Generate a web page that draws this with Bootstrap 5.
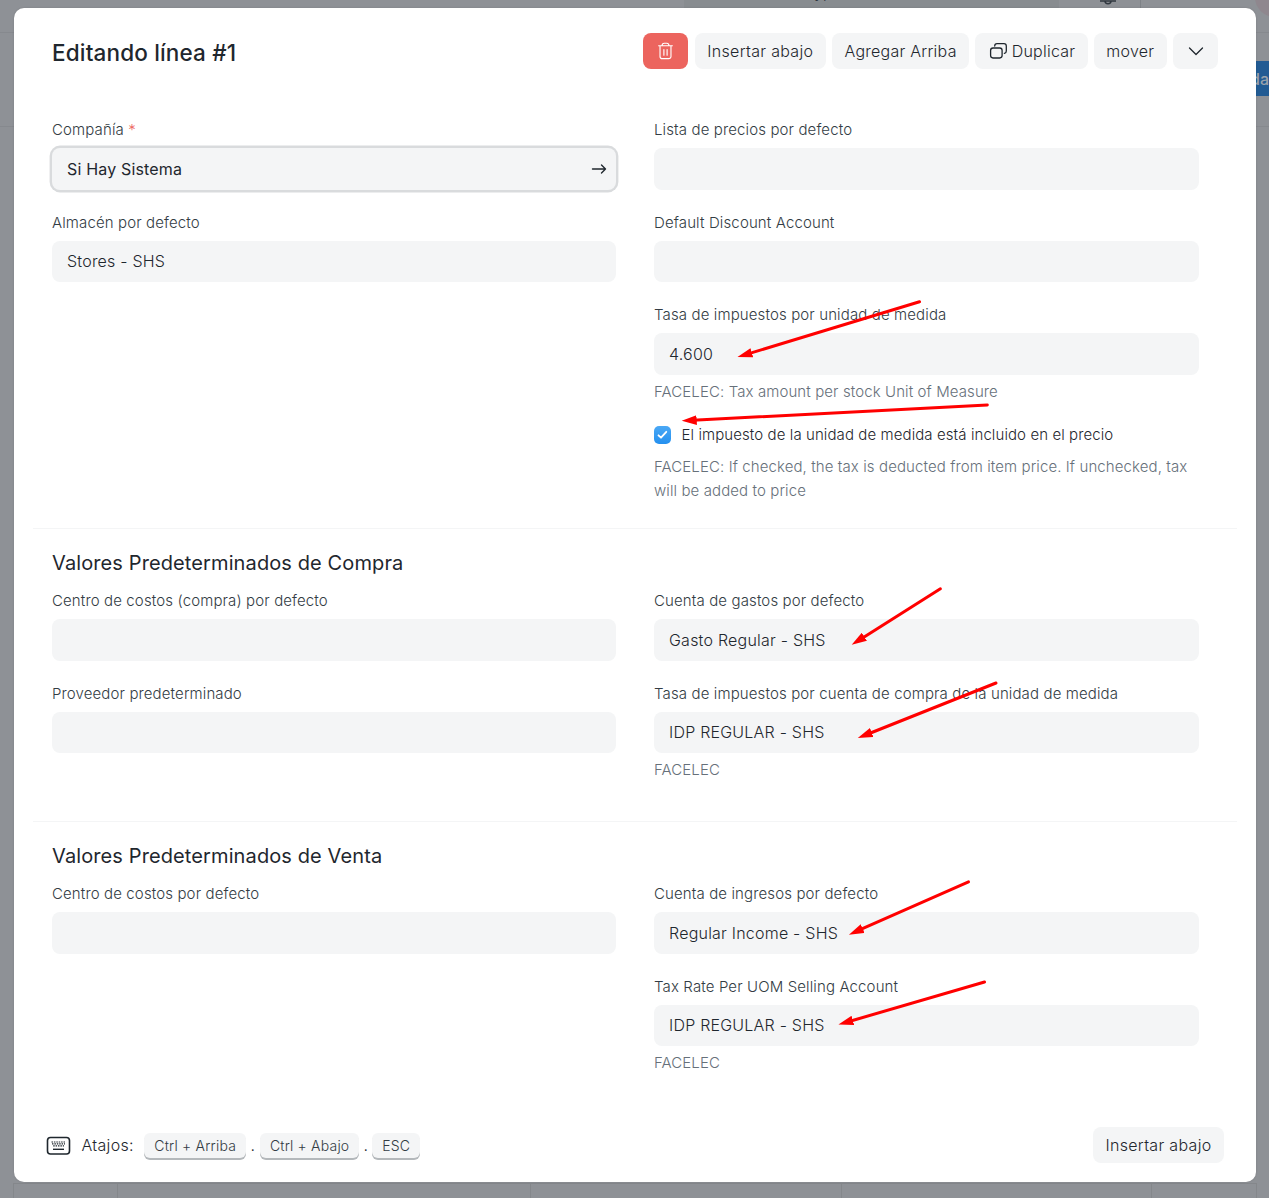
<!DOCTYPE html>
<html lang="es">
<head>
<meta charset="utf-8">
<meta name="viewport" content="width=device-width, initial-scale=1">
<title>Editando línea #1</title>
<link href="https://cdn.jsdelivr.net/npm/bootstrap@5.3.0/dist/css/bootstrap.min.css" rel="stylesheet">
<style>
  html, body { height: 1198px; overflow: hidden; }
  body { font-family: Inter, "Liberation Sans", sans-serif; font-weight: 350; background: #8e9196; color: #1f272e; position: relative; }
  .page-behind { height: 1198px; }
  .top-strip { height: 33px; border-bottom: 1px solid #86898e; color: #30373f; }
  .search-stub { margin-left: 684px; width: 375px; height: 8px; padding-left: 49px; background: #888c90; font-size: 15.5px; letter-spacing: .2px; line-height: 20px; white-space: nowrap; }
  .search-stub span { display: block; margin-top: -17px; }
  .avatar-stub { margin-left: auto; width: 40px; height: 40px; border-radius: 50%; background: #8f878e; margin-top: -23px; margin-right: -26px; }
  .head-strip { height: 94px; border-bottom: 1px solid #86898e; }
  .save-stub { width: 30px; height: 35px; margin: 28px 0 0 auto; background: #225b93; color: #9ba2ab; font-size: 16px; font-weight: 450; line-height: 36px; text-align: right; }
  .grid-stub { height: 15px; margin: 0 12px 0 13px; border: 1px solid #84878b; border-bottom: 0; }
  .grid-stub div { border-right: 1px solid #84878b; }
  .editor { position: absolute; left: 14px; top: 8px; width: 1242px; height: 1174px; border: 0; border-radius: 10px; background: #fff; box-shadow: 0 0 2px rgba(0,0,0,.15); }
  .editor-head { height: 85px; padding: 25px 38px 0; }
  .editor-title { font-size: 22.5px; font-weight: 550; line-height: 38px; letter-spacing: .16px; margin: 1px 0 0; }
  .btn-soft, .btn-del { height: 36px; border: 0; border-radius: 8px; background: #f4f5f6; color: #1f272e; font-size: 16px; font-weight: 350; letter-spacing: .25px; padding: 0 12.3px; line-height: 36px; white-space: nowrap; }
  .btn-insert { width: 131px; letter-spacing: .32px; padding: 0; }
  .btn-del { background: #ec645e; width: 45px; padding: 0; }
  .btn-caret { width: 45px; padding: 0; }
  .form-part { margin: 0 19px; padding: 0 19px; }
  .form-part + .form-part { border-top: 1px solid #f4f5f6; }
  .col-left { width: 564px; }
  .col-right { width: 545px; margin-left: 38px; }
  .fld { height: 92.5px; }
  .fld label { display: block; height: 26px; line-height: 16px; font-size: 15px; letter-spacing: .125px; color: #333c44; white-space: nowrap; }
  .fld .form-control { height: 41.6px; border: 0; border-radius: 8px; background: #f4f5f6; color: #1f272e; font-size: 16px; font-weight: 350; letter-spacing: .22px; padding: 0 15px; line-height: 42px; display: flex; align-items: center; }
  .fld .is-focus { box-shadow: 0 0 0 2.4px #d9dbdd; font-weight: 400; letter-spacing: .17px; }
  .hint { font-size: 15px; line-height: 24px; letter-spacing: .1px; color: #66707a; margin: 0; }
  .sec-title { font-size: 20px; font-weight: 430; line-height: 24px; letter-spacing: .11px; margin: 0; }
  .chk-box { width: 17px; height: 18px; border-radius: 5px; background: linear-gradient(#4aa8f5, #2490ef); }
  .chk-text { font-size: 15px; letter-spacing: .09px; line-height: 18px; margin-left: 10.500px; white-space: nowrap; }
  .editor-foot { margin-top: auto; height: 55px; padding: 0 32px; }
  .key-cap { height: 25px; line-height: 26px; font-size: 14px; letter-spacing: .2px; padding: 0 10px; border-radius: 6px; background: #f4f5f6; color: #333c44; box-shadow: 0 2px 0 #b4b8bb; white-space: nowrap; }
  .foot-text { font-size: 16px; letter-spacing: .3px; }
  .arrows { position: absolute; left: 0; top: 0; pointer-events: none; }
</style>
</head>
<body>
<div class="page-behind d-flex flex-column">
  <div class="top-strip d-flex">
    <div class="search-stub"><span>Search or type a command (Ctrl + G)</span></div>
    <svg style="margin-left:39px" width="44" height="8" viewBox="0 0 44 8" fill="none" stroke="#30373f" stroke-width="1.500"><path d="M2 1h16M7 1c0 3.500 6 3.500 6 0"/><path d="M42.500 0v8" stroke="#7e8287" stroke-width="1"/></svg>
    <div class="avatar-stub"></div>
  </div>
  <div class="head-strip d-flex"><div class="save-stub">da</div></div>
  <div class="grid-stub d-flex mt-auto"><div style="width:104px"></div><div style="width:413px"></div><div style="width:311px"></div><div style="width:310px"></div></div>
</div>

<div class="editor d-flex flex-column">
  <div class="editor-head d-flex justify-content-between align-items-start">
    <h4 class="editor-title">Editando línea #1</h4>
    <div class="d-flex" style="gap:6.4px">
      <button class="btn btn-del d-flex align-items-center justify-content-center" aria-label="Eliminar">
        <svg width="17" height="20" viewBox="0 0 18 20" fill="none" stroke="#fff" stroke-width="1.200" stroke-linecap="round" stroke-linejoin="round"><path d="M1.700 4.500h14.600M3.200 4.500v11.200a2.400 2.400 0 0 0 2.400 2.400h6.800a2.400 2.400 0 0 0 2.400-2.400V4.500M5.300 4.300c.1-1.700 1-2.500 2.300-2.500h2.800c1.300 0 2.200.8 2.300 2.500M7.300 8.500v6M10.700 8.500v6"/></svg>
      </button>
      <button class="btn btn-soft btn-insert">Insertar abajo</button>
      <button class="btn btn-soft">Agregar Arriba</button>
      <button class="btn btn-soft d-flex align-items-center"><svg style="margin-right:4px" width="20" height="20" viewBox="0 0 20 20" fill="none" stroke="#1f272e" stroke-width="1.300"><rect x="2.600" y="7" width="11.500" height="10" rx="2.400"/><path d="M6.700 5c0-1.500.8-2.300 2.300-2.300h7c1.500 0 2.300.8 2.300 2.300v5c0 1.500-.6 2.200-1.900 2.400" stroke-linecap="round"/></svg>Duplicar</button>
      <button class="btn btn-soft">mover</button>
      <button class="btn btn-soft btn-caret d-flex align-items-center justify-content-center" aria-label="Contraer"><svg width="16" height="10" viewBox="0 0 16 10" fill="none" stroke="#1f272e" stroke-width="1.300" stroke-linecap="round" stroke-linejoin="round"><path d="M1.500 2 8 8.500 14.500 2"/></svg></button>
    </div>
  </div>

  <div class="form-part d-flex" style="height:435px;padding-top:29px">
    <div class="col-left">
      <div class="fld"><label>Compañía <span style="color:#ec645e">*</span></label>
        <div class="form-control is-focus justify-content-between">Si Hay Sistema
          <svg width="16" height="12" viewBox="0 0 16 12" fill="none" stroke="#1f272e" stroke-width="1.400" stroke-linecap="round" stroke-linejoin="round" style="margin-right:-6px"><path d="M1.500 6h13M10.500 2l4 4-4 4"/></svg>
        </div></div>
      <div class="fld"><label>Almacén por defecto</label><div class="form-control">Stores - SHS</div></div>
    </div>
    <div class="col-right">
      <div class="fld"><label>Lista de precios por defecto</label><div class="form-control"></div></div>
      <div class="fld"><label>Default Discount Account</label><div class="form-control"></div></div>
      <div class="fld" style="height:73px"><label>Tasa de impuestos por unidad de medida</label><div class="form-control">4.600</div></div>
      <p class="hint">FACELEC: Tax amount per stock Unit of Measure</p>
      <div class="d-flex align-items-center" style="margin-top:22px">
        <span class="chk-box d-flex align-items-center justify-content-center"><svg width="11" height="10" viewBox="0 0 11 10" fill="none" stroke="#fff" stroke-width="1.800" stroke-linecap="round" stroke-linejoin="round"><path d="M1.500 5.300 4 7.700 9.300 1.800"/></svg></span>
        <span class="chk-text">El impuesto de la unidad de medida está incluido en el precio</span>
      </div>
      <p class="hint" style="margin-top:11px">FACELEC: If checked, the tax is deducted from item price. If unchecked, tax will be added to price</p>
    </div>
  </div>

  <div class="form-part" style="height:293px;padding-top:22px">
    <h5 class="sec-title">Valores Predeterminados de Compra</h5>
    <div class="d-flex" style="margin-top:18px">
      <div class="col-left">
        <div class="fld"><label>Centro de costos (compra) por defecto</label><div class="form-control"></div></div>
        <div class="fld"><label>Proveedor predeterminado</label><div class="form-control"></div></div>
      </div>
      <div class="col-right">
        <div class="fld"><label>Cuenta de gastos por defecto</label><div class="form-control">Gasto Regular - SHS</div></div>
        <div class="fld" style="height:72px"><label>Tasa de impuestos por cuenta de compra de la unidad de medida</label><div class="form-control">IDP REGULAR - SHS</div></div>
        <p class="hint">FACELEC</p>
      </div>
    </div>
  </div>

  <div class="form-part" style="height:293px;padding-top:22px">
    <h5 class="sec-title">Valores Predeterminados de Venta</h5>
    <div class="d-flex" style="margin-top:18px">
      <div class="col-left">
        <div class="fld"><label>Centro de costos por defecto</label><div class="form-control"></div></div>
      </div>
      <div class="col-right">
        <div class="fld"><label>Cuenta de ingresos por defecto</label><div class="form-control">Regular Income - SHS</div></div>
        <div class="fld" style="height:72px"><label>Tax Rate Per UOM Selling Account</label><div class="form-control">IDP REGULAR - SHS</div></div>
        <p class="hint">FACELEC</p>
      </div>
    </div>
  </div>

  <div class="editor-foot d-flex justify-content-between align-items-start">
    <div class="d-flex align-items-center" style="height:36px">
      <svg width="25" height="20" viewBox="0 0 25 20" fill="none" stroke="#1f272e" style="margin-top:2px"><rect x="1.500" y="1.500" width="22" height="16.500" rx="3" stroke-width="1.600"/><path d="M5.500 6h14M6 7.900h13M7.200 9.800h10.800" stroke-width="1.200" stroke-dasharray="1.500 .9"/><path d="M7 13.300h11" stroke-width="1.400"/></svg>
      <span class="foot-text" style="margin:0 10.500px 0 10.500px">Atajos:</span>
      <span class="key-cap">Ctrl + Arriba</span><span class="foot-text" style="margin:0 4.500px">.</span>
      <span class="key-cap">Ctrl + Abajo</span><span class="foot-text" style="margin:0 4px">.</span>
      <span class="key-cap">ESC</span>
    </div>
    <button class="btn btn-soft btn-insert">Insertar abajo</button>
  </div>
</div>

<svg class="arrows" width="1269" height="1198" viewBox="0 0 1269 1198" fill="none" stroke="#f00" stroke-width="3" stroke-linecap="round">
  <defs><marker id="tip" markerUnits="userSpaceOnUse" markerWidth="16" markerHeight="10" refX="4" refY="5" orient="auto"><path d="M0 .2 15 5 0 9.800Z" fill="#f00" stroke="none"/></marker></defs>
  <g>
    <path marker-end="url(#tip)" d="M919.500 301.700 748 353.900"/>
    <path marker-end="url(#tip)" d="M987.300 404.900 692.700 420.300"/>
    <path marker-end="url(#tip)" d="M940.400 588.800 861 638.900"/>
    <path marker-end="url(#tip)" d="M996 683 868 734"/>
    <path marker-end="url(#tip)" d="M968.500 881.800 859 930.200"/>
    <path marker-end="url(#tip)" d="M984.500 982 849 1021.500"/>
  </g>
</svg>
<script src="https://cdn.jsdelivr.net/npm/bootstrap@5.3.0/dist/js/bootstrap.bundle.min.js"></script>
</body>
</html>
